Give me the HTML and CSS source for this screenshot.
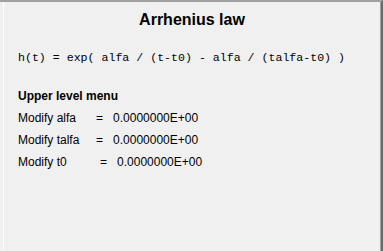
FILE: index.html
```html
<!DOCTYPE html>
<html>
<head>
<meta charset="utf-8">
<link rel="stylesheet" href="styles.css">
</head>
<body>
<div class="window">
  <div class="panel">
    <h1 class="title">Arrhenius law</h1>
    <div class="formula">h(t) = exp( alfa / (t-t0) - alfa / (talfa-t0) )</div>
    <div class="menu-head">Upper level menu</div>
    <div class="row">Modify alfa      =   0.0000000E+00</div>
    <div class="row">Modify talfa     =   0.0000000E+00</div>
    <div class="row">Modify t0          =   0.0000000E+00</div>
  </div>
</div>
</body>
</html>
```
FILE: styles.css
```css
html, body {
  margin: 0;
  padding: 0;
  width: 383px;
  height: 251px;
  overflow: hidden;
  background: #f0f0f0;
}
.window {
  box-sizing: border-box;
  width: 383px;
  height: 251px;
  border-top: 2px solid #a0a0a0;
  border-right: 2px solid #696969;
  padding-left: 3px;
  display: flex;
}
.panel {
  flex: 1;
  border-left: 1px solid #ffffff;
  border-right: 1px solid #a0a0a0;
  background: #f0f0f0;
  font-family: "Liberation Sans", Arial, sans-serif;
  color: #000;
}
.title {
  margin: 0;
  padding-top: 9px;
  font-size: 16px;
  font-weight: bold;
  line-height: 18px;
  text-align: center;
}
.formula {
  margin-top: 22px;
  padding-left: 14px;
  font-family: "Liberation Mono", "Courier New", monospace;
  font-size: 11.6px;
  line-height: 14px;
  white-space: pre;
}
.menu-head {
  margin-top: 24px;
  padding-left: 14px;
  font-size: 12px;
  font-weight: bold;
  line-height: 14px;
}
.row {
  margin-top: 8px;
  padding-left: 14px;
  font-size: 12px;
  line-height: 14px;
  white-space: pre;
}
```
